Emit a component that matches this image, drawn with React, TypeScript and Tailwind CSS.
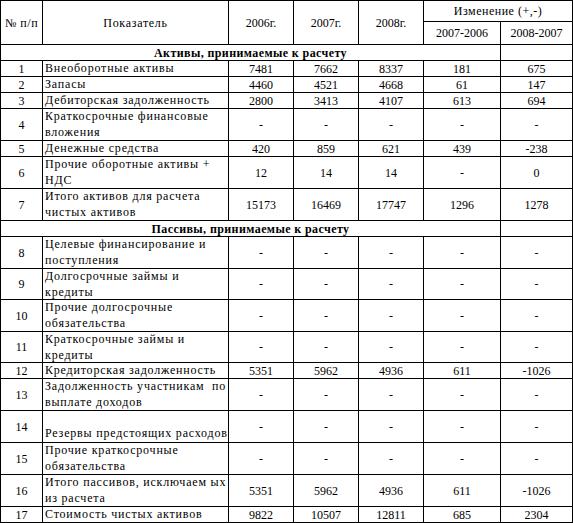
import React from "react";

type Row = {
  n: string;
  lines: string[];
  vals: string[];
  bottom?: boolean;
};

const D = ["-", "-", "-", "-", "-"];

const assets: Row[] = [
  { n: "1", lines: ["Внеоборотные активы"], vals: ["7481", "7662", "8337", "181", "675"] },
  { n: "2", lines: ["Запасы"], vals: ["4460", "4521", "4668", "61", "147"] },
  { n: "3", lines: ["Дебиторская задолженность"], vals: ["2800", "3413", "4107", "613", "694"] },
  { n: "4", lines: ["Краткосрочные финансовые", "вложения"], vals: D },
  { n: "5", lines: ["Денежные средства"], vals: ["420", "859", "621", "439", "-238"] },
  { n: "6", lines: ["Прочие оборотные активы +", "НДС"], vals: ["12", "14", "14", "-", "0"] },
  { n: "7", lines: ["Итого активов для расчета", "чистых активов"], vals: ["15173", "16469", "17747", "1296", "1278"] },
];

const liabilities: Row[] = [
  { n: "8", lines: ["Целевые финансирование и", "поступления"], vals: D },
  { n: "9", lines: ["Долгосрочные займы и", "кредиты"], vals: D },
  { n: "10", lines: ["Прочие долгосрочные", "обязательства"], vals: D },
  { n: "11", lines: ["Краткосрочные займы и", "кредиты"], vals: D },
  { n: "12", lines: ["Кредиторская задолженность"], vals: ["5351", "5962", "4936", "611", "-1026"] },
  { n: "13", lines: ["Задолженность участникам  по", "выплате доходов"], vals: D },
  { n: "14", lines: ["Резервы предстоящих расходов"], vals: D, bottom: true },
  { n: "15", lines: ["Прочие краткосрочные", "обязательства"], vals: D },
  { n: "16", lines: ["Итого пассивов, исключаем ых", "из расчета"], vals: ["5351", "5962", "4936", "611", "-1026"] },
  { n: "17", lines: ["Стоимость чистых активов"], vals: ["9822", "10507", "12811", "685", "2304"] },
];

const cell = "bg-white flex items-center justify-center";

function DataRow({ r }: { r: Row }) {
  return (
    <>
      <div className={cell}>{r.n}</div>
      <div
        className={
          "bg-white flex flex-col pl-[2px] leading-[15.5px] tracking-[0.8px] whitespace-pre " +
          (r.bottom ? "justify-end pb-px" : "justify-start")
        }
      >
        {r.lines.map((l, i) => (
          <span key={i}>{l}</span>
        ))}
      </div>
      {r.vals.map((v, i) => (
        <div key={i} className={cell}>
          {v}
        </div>
      ))}
    </>
  );
}

function Section({ title }: { title: string }) {
  return (
    <>
      <div className="col-span-6 bg-white flex items-center justify-center font-bold tracking-[0.4px]">
        {title}
      </div>
      <div className="bg-white" />
    </>
  );
}

export default function App() {
  return (
    <div className="w-[573px] h-[523px] bg-white font-['Liberation_Serif','Times_New_Roman',serif]">
      <div className="grid bg-black p-px gap-px w-[573px] h-[523px] text-[12px] text-black grid-cols-[41px_185px_64px_64px_64px_76px_71px] grid-rows-[20px_22px_15px_15px_15px_15px_31px_15px_31px_31px_15px_31px_30px_31px_30px_15px_31px_31px_31px_31px_15px]">
        <div className={cell + " row-span-2 tracking-[0.5px]"}>№ п/п</div>
        <div className={cell + " row-span-2 tracking-[0.7px]"}>Показатель</div>
        <div className={cell + " row-span-2"}>2006г.</div>
        <div className={cell + " row-span-2"}>2007г.</div>
        <div className={cell + " row-span-2"}>2008г.</div>
        <div className={cell + " col-span-2 tracking-[0.5px]"}>Изменение (+,-)</div>
        <div className={cell}>2007-2006</div>
        <div className={cell}>2008-2007</div>

        <Section title="Активы, принимаемые к расчету" />
        {assets.map((r) => (
          <DataRow key={r.n} r={r} />
        ))}
        <Section title="Пассивы, принимаемые к расчету" />
        {liabilities.map((r) => (
          <DataRow key={r.n} r={r} />
        ))}
      </div>
    </div>
  );
}
